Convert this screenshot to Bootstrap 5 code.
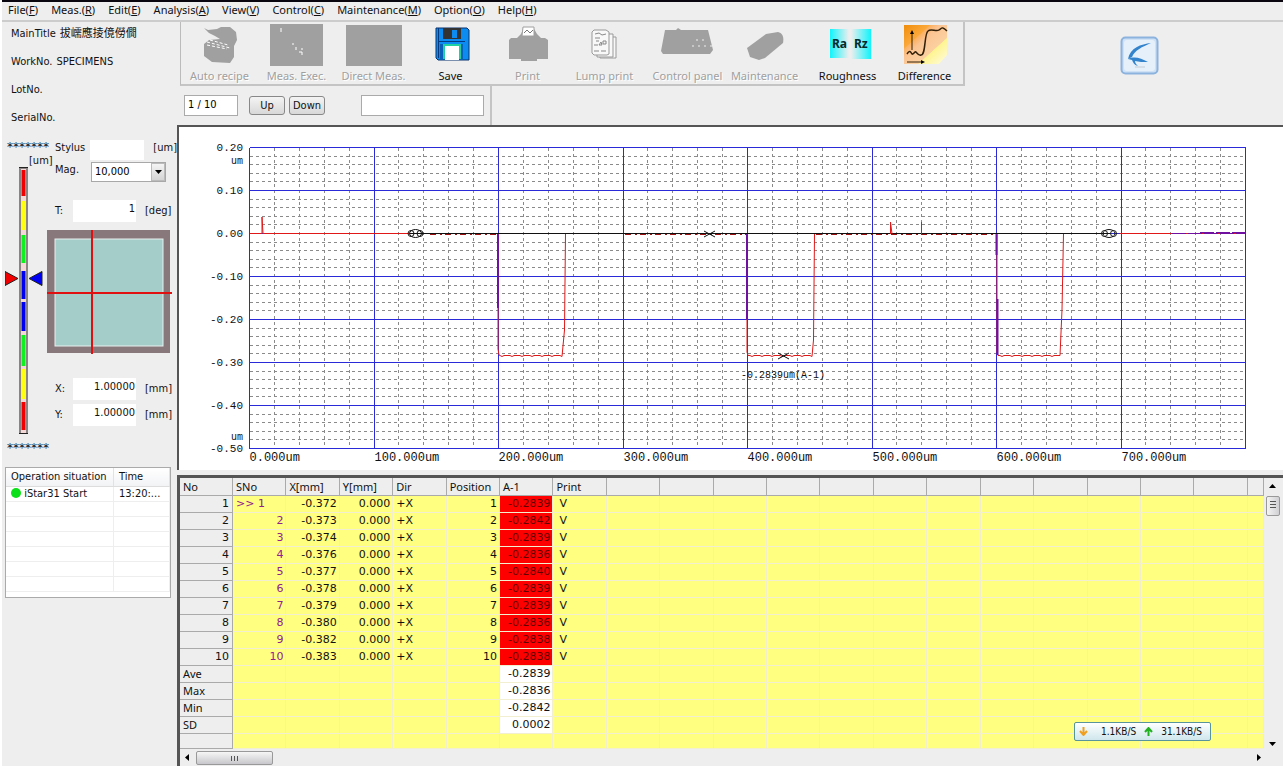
<!DOCTYPE html>
<html lang="en">
<head>
<meta charset="utf-8">
<meta name="viewport" content="width=device-width, initial-scale=1">
<title>iStar31</title>
<link rel="stylesheet" href="https://cdn.jsdelivr.net/npm/bootstrap@5.3.0/dist/css/bootstrap.min.css">
<style>
body{background:#eee;color:#111;font-family:"Noto Sans","Noto Sans CJK SC",sans-serif;font-size:11px;line-height:16px;border-left:2px solid #fff;border-right:2px solid #fff}
.menubar{border-top:2px solid #0a0610;border-bottom:2px solid #ccc;height:22px;padding-left:6px;gap:13px}
.menubar a{color:#111;text-decoration:none;line-height:15px;white-space:nowrap}
.side{width:175px;font-family:"DejaVu Sans Condensed","Noto Sans CJK SC",sans-serif;font-size:11px}
.meta-line{padding-left:9px;margin-bottom:12px;line-height:16px;display:flex;gap:4px}
.gauges{padding-top:2px}
.gauge-col{width:42px;margin-left:3px}
.stars{line-height:14px;font-size:12px;font-family:"DejaVu Sans",sans-serif;padding-left:2px;white-space:nowrap}
.stars-end{margin-top:6px}
.unit{line-height:13px;padding-left:24px;white-space:nowrap}
.fields{width:130px}
.frow{display:flex;padding-left:8px;white-space:nowrap}
.frow input{border:0;border-radius:0;background:#fff;padding:0 1px 6px 0;text-align:right;font-size:11px;line-height:16px;height:22px;width:63px;color:#111}
.frow input.stylus{width:54px;height:20px}
.frow-mag{margin-top:2px}
.frow-t{margin-top:18px}
.lab-s{width:18px}.lab-l{width:36px}
.frow .end{padding-left:9px}
.mag{appearance:none;width:75px;height:20px;padding:0 3px;font-size:11px;border:1px solid #a8a8a8;border-radius:0;background:#fff;line-height:16px}
.mag-arrow{right:1px;top:1px;width:14px;height:18px;border:1px solid #bbb;background:linear-gradient(#f4f4f4,#d4d4d4);pointer-events:none}
.oplist{width:166px;margin:12px 0 0 3px;border:1px solid #aaa;background:#fff;padding-bottom:5px}
.oplist table{width:100%;table-layout:fixed;white-space:nowrap}
.oplist .when{width:56px}
.oplist th{font-weight:400;height:18px;line-height:17px;background:linear-gradient(#fff,#f2f3f5);border-bottom:1px solid #ddd;border-right:1px solid #e2e2e2;padding:0 5px}
.oplist td{height:15px;line-height:14px;border-bottom:1px solid #eee;border-right:1px solid #eee;padding:0 5px}
.dot{width:10px;height:10px;border-radius:50%;background:#0be01a;display:inline-block;vertical-align:-1px}
.work{min-width:0}
.toolbar{border-left:1px solid #bbb;border-right:2px solid #c4c4c4;border-bottom:2px solid #c4c4c4;height:64px;margin-left:3px}
.tool{width:77px;border:0;background:none;padding:0;display:flex;flex-direction:column;align-items:center;white-space:nowrap;color:#111;line-height:16px}
.tool svg{height:44px;width:56px;margin-bottom:2px}
.tool:disabled{color:#a0a0a0;text-shadow:1px 1px #fff}
.tool-gap{margin-left:6px}
.birdlogo{margin:14px 124px 0 auto}
.pager{height:39px;width:315px;padding:9px 0 0 7px;border-right:2px solid #c4c4c4;font-family:"DejaVu Sans Condensed",sans-serif}
.pager input{border:1px solid #aaa;border-radius:0;background:#fff;height:21px;font-size:11px;line-height:14px;padding:0 3px 2px}
.pager .page-no{width:54px;margin-right:11px}
.pager .note{width:123px;margin-left:36px}
.pbtn{width:36px;height:19px;margin-top:1px;border:1px solid #888;border-radius:3px;background:linear-gradient(#f4f4f4,#d8d8d8);font-size:11px;line-height:16px;padding:0;color:#111}
.chart-panel{border-top:2px solid #555;border-left:2px solid #555;background:#fff}
.chart-panel svg{width:100%;height:auto;display:block}
.grid-panel{margin-top:5px;border-top:3px solid #555;border-left:3px solid #555}
.data{width:100%;table-layout:fixed;border-collapse:separate;border-spacing:0;line-height:16px;white-space:nowrap}
.data .rowhead{width:53px}.data .tail{width:16px}
.data th{font-weight:400;background:#eee;border-right:1px solid #aaa;border-bottom:1px solid #aaa;height:17px;padding:0 3px}
.data thead th{height:18px;padding-top:1px}
.data td,.data th.text-end{font-family:"DejaVu Sans",sans-serif;font-size:11px}
.data td{height:17px;background:#ffff80;border-right:1px solid #f2eed0;border-bottom:1px solid #f2eed0;padding:0 2px 0 3px}
.data tr:last-child td,.data tr:last-child th[scope=row]{height:15px;line-height:14px}
.data .ng{background:#f00;color:#600000}
.data .calc{background:#fff}
.data .sno{color:#902090}
.data .v{padding-left:6px}
.vbar{width:19px;padding:6px 2px 3px 0}
.vthumb{width:14px;height:20px;border:1px solid #999;border-radius:2px;background:linear-gradient(90deg,#f4f4f4,#d0d0d4);margin-top:8px}
.hbar{height:17px;padding:0 21px 0 4px}
.hthumb{width:77px;height:14px;border:1px solid #999;border-radius:2px;background:linear-gradient(#f6f6f6,#c8c8cc);margin-left:5px}
.netspeed{right:72px;bottom:25px;height:19px;width:137px;border:1px solid #58949c;border-radius:2px;background:linear-gradient(#fff,#cfe6ec);font:10px/17px "DejaVu Sans Condensed",sans-serif;white-space:nowrap}
</style>
</head>
<body>
<nav class="menubar d-flex" aria-label="Main menu">
<a href="#">File(<u>F</u>)</a><a href="#">Meas.(<u>R</u>)</a><a href="#">Edit(<u>E</u>)</a><a href="#">Analysis(<u>A</u>)</a><a href="#">View(<u>V</u>)</a><a href="#">Control(<u>C</u>)</a><a href="#">Maintenance(<u>M</u>)</a><a href="#">Option(<u>O</u>)</a><a href="#">Help(<u>H</u>)</a>
</nav>
<div class="d-flex">
<aside class="side flex-shrink-0 pt-1">
  <div class="meta-line"><span>MainTitle</span><span>拔嶿應掕傹僗僩</span></div>
  <div class="meta-line"><span>WorkNo.</span><span>SPECIMENS</span></div>
  <div class="meta-line">LotNo.</div>
  <div class="meta-line">SerialNo.</div>
  <div class="gauges d-flex">
    <div class="gauge-col flex-shrink-0">
      <div class="stars">*******</div>
      <div class="unit">[um]</div>
      <svg width="38" height="268" viewBox="5 168 38 268" class="d-block" role="img" aria-label="Stylus level">
        <rect x="19" y="168" width="9" height="267" fill="#8c8484"/><path d="M19 168.500h9M19 434.500h9" stroke="#222"/>
        <rect x="21" y="170" width="5" height="264" fill="#f4d8d8"/>
        <path d="M23.500 171v26M23.500 403v28" stroke="#f00000" stroke-width="4"/><path d="M23.500 202v29M23.500 370v30" stroke="#ffff10" stroke-width="4"/><path d="M23.500 236v28M23.500 336v31" stroke="#10f020" stroke-width="4"/><path d="M23.500 272v28M23.500 303v29" stroke="#0000f0" stroke-width="4"/>
        <path d="M5 272.500v14l13-7z" fill="#f00000" stroke="#222"/><path d="M42 272.500v14l-13-7z" fill="#0000f0" stroke="#222"/>
      </svg>
      <div class="stars stars-end">*******</div>
    </div>
    <div class="fields">
      <div class="frow"><label class="lab-l" for="sty">Stylus</label><input id="sty" class="stylus"><span class="end">[um]</span></div>
      <div class="frow frow-mag"><label class="lab-l" for="mag">Mag.</label><div class="position-relative"><select id="mag" class="mag"><option>10,000</option></select><span class="mag-arrow position-absolute d-flex align-items-center justify-content-center"><svg width="7" height="4"><path d="M0 0h7L3.500 4z"/></svg></span></div></div>
      <div class="frow frow-t align-items-center"><label class="lab-s" for="tt">T:</label><input id="tt" value="1"><span class="end">[deg]</span></div>
      <svg class="d-block mt-2" width="125" height="124" viewBox="0 0 125 124" role="img" aria-label="Stage position"><rect width="123" height="123" fill="#88777b"/><rect x="8" y="9" width="108" height="107" fill="#a4cdca" stroke="#e8f0ee"/><path d="M45 0v124M0 63h125" stroke="#e01010" stroke-width="2"/></svg>
      <div class="frow mt-4 align-items-center"><label class="lab-s" for="xx">X:</label><input id="xx" value="1.00000"><span class="end">[mm]</span></div>
      <div class="frow mt-1 align-items-center"><label class="lab-s" for="yy">Y:</label><input id="yy" value="1.00000"><span class="end">[mm]</span></div>
    </div>
  </div>
  <div class="oplist"><table><colgroup><col><col class="when"></colgroup>
    <thead><tr><th>Operation situation</th><th>Time</th></tr></thead>
    <tbody><tr><td><span class="dot"></span> iStar31 Start</td><td>13:20:...</td></tr><tr><td></td><td></td></tr><tr><td></td><td></td></tr><tr><td></td><td></td></tr><tr><td></td><td></td></tr><tr><td></td><td></td></tr><tr><td></td><td></td></tr></tbody></table></div>
</aside>
<main class="work flex-grow-1">
  <div class="d-flex align-items-start">
    <div class="toolbar d-flex">
      <button class="tool" disabled><svg viewBox="0 0 56 44"><path d="M12 6l4 2 9-1 4-2h9l6 5 1 8-3 6v11l-4 6-18-1-8-6V22l5-4 11-1-5-3-6-3z" fill="#a0a0a0"/><path d="M15 20l23 6M15 23l20 4M18 18l18 5" stroke="#fff" stroke-dasharray="3 2"/></svg>Auto recipe</button>
      <button class="tool" disabled><svg viewBox="0 0 56 44"><path d="M1 2h53v42H1z" fill="#a0a0a0"/><path d="M12 6v4M23 22h2M27 25v3M32 27h2M30 30h3v3" stroke="#fff" fill="none"/></svg>Meas. Exec.</button>
      <button class="tool" disabled><svg viewBox="0 0 56 44"><path d="M0 3h56v41H0z" fill="#a0a0a0"/></svg>Direct Meas.</button>
      <button class="tool"><svg viewBox="0 0 56 44"><path d="M13 6h31l2 2v30H15l-2-2z" fill="#0c8cf0" stroke="#06306c"/><path d="M20 6h18v11H20z" fill="#333"/><path d="M29 8h5v8h-5z" fill="#0c8cf0"/><path d="M16 19.500h26M15.500 6v30" stroke="#063a80"/><path d="M17 22h23v15H17z" fill="#0a60b8"/><path d="M20 22h18v15H20z" fill="#20d0a0"/><path d="M22 24h14v14H22z" fill="#fff"/></svg>Save</button>
      <button class="tool" disabled><svg viewBox="0 0 56 44"><path d="M9 18l2-2h6l4-4 3-7h9l4 7 4 4h4l3 2v19H37v2H21v-2H9z" fill="#a0a0a0"/><path d="M23 5h11v9H22z" fill="#fff" stroke="#a0a0a0"/><path d="M24 11l3-3 3 3 3-3" fill="none" stroke="#777"/></svg>Print</button>
      <button class="tool" disabled><svg viewBox="0 0 56 44"><g fill="#f8f8f8" stroke="#999"><path d="M23 15h16v21H23z"/><path d="M20 12h16v23H20z"/><path d="M15 10l2-2h12l3 2v22l-2 1H17l-2-2z"/></g><path d="M18 12l4-1 3 2 4-1M18 16h5M19 19h3M17 23h4M17 29h5M24 29h5" stroke="#888" fill="none"/><path d="M22 23l2-3 1 3zM26 19h3v3h-3z" fill="none" stroke="#888"/></svg>Lump print</button>
      <button class="tool tool-gap" disabled><svg viewBox="0 0 56 44"><path d="M5 8h11l2-2 3 2h27l5 20-3 4H3l-2-3z" fill="#a0a0a0"/><path d="M36 18h12M32 24h20" stroke="#eee" stroke-dasharray="2 4"/></svg>Control panel</button>
      <button class="tool" disabled><svg viewBox="0 0 56 44"><path d="M10 26l19-14 12-2c5 1 6 6 5 11L28 36l-6 2-9-3z" fill="#a0a0a0"/></svg>Maintenance</button>
      <button class="tool tool-gap"><svg viewBox="0 0 56 44"><defs><linearGradient id="ra"><stop offset="0" stop-color="#10f4fc"/><stop offset="1" stop-color="#eee"/></linearGradient><linearGradient id="rz"><stop offset="0" stop-color="#eee"/><stop offset="1" stop-color="#10f4fc"/></linearGradient></defs><path d="M10 7h19v29H10z" fill="url(#ra)"/><path d="M31 7h20v30H31z" fill="url(#rz)"/><text x="12" y="26" font-family="Noto Sans" font-size="12" font-weight="700" fill="#032a2c">Ra</text><text x="34" y="26" font-family="Noto Sans" font-size="12" font-weight="700" fill="#032a2c">Rz</text></svg>Roughness</button>
      <button class="tool"><svg viewBox="0 0 56 44"><defs><linearGradient id="df" x2="1" y2="1"><stop offset="0" stop-color="#f08c08"/><stop offset=".3" stop-color="#fba93c"/><stop offset=".31" stop-color="#fbb060"/><stop offset=".42" stop-color="#fbc492"/><stop offset=".66" stop-color="#fcd0a0"/><stop offset=".67" stop-color="#fff490"/><stop offset="1" stop-color="#fffce0"/></linearGradient></defs><path d="M7 3h43v30l-8 9H7z" fill="url(#df)"/><path d="M10 32c3-5 4-1 5 0s3-3 4-2 3 4 5 3c5 0 3-21 7-24 3-3 8 1 11-1s3-4 8 1" fill="none" stroke="#322008" stroke-width="1.500"/><path d="M15 28V10M10 40h16" stroke="#322008"/><path d="M13 12l2-4 2 4zM24 38l4 2-4 2z"/></svg>Difference</button>
    </div>
    <svg class="birdlogo" width="39" height="39" viewBox="0 0 39 39" role="img" aria-label="Bird logo"><rect x="1.500" y="1.500" width="36" height="36" rx="4" fill="#cfe1f4" stroke="#8cb2de" stroke-width="2"/><rect x="4" y="4" width="31" height="31" rx="3" fill="#e6f0fa"/><path d="M31 7C21 8 10 12 8 23l4-2c3-7 10-10 19-14z" fill="#3384cc"/><path d="M8 23c6-3 13-1 20 3-5 0-9 0-13-1 0 2 1 3 3 5-4-1-5-4-6-6z" fill="#3384cc"/><path d="M15 31h10" stroke="#c4ccd4"/></svg>
  </div>
  <div class="pager d-flex align-items-start">
    <input class="page-no" aria-label="Page" value="1 / 10"><button class="pbtn">Up</button><button class="pbtn ms-1">Down</button><input class="note" aria-label="Comment">
  </div>
  <section class="chart-panel"><svg id="chart" viewBox="179 127 1104 343" role="img" aria-label="Step profile"></svg></section>
  <section class="grid-panel position-relative">
    <div class="d-flex">
      <div class="work flex-grow-1"><table class="data"><colgroup id="cols"></colgroup><thead><tr id="head"></tr></thead><tbody id="rows"></tbody></table></div>
      <div class="vbar flex-shrink-0 d-flex flex-column align-items-center"><svg width="7" height="4"><path d="M0 4h7L3.500 0z"/></svg><div class="vthumb"><svg width="6" height="8" class="d-block mx-auto mt-1"><path d="M0 .5h6M0 3.500h6M0 6.500h6" stroke="#555"/></svg></div><svg class="mt-auto" width="7" height="4"><path d="M0 0h7L3.500 4z"/></svg></div>
    </div>
    <div class="hbar d-flex align-items-center"><svg width="7" height="7"><path d="M5 0v7L1 3.500z"/></svg><div class="hthumb"><svg width="8" height="6" class="d-block mx-auto mt-1"><path d="M.5 0v5M3.500 0v5M6.500 0v5" stroke="#555"/></svg></div><svg class="ms-auto" width="5" height="7"><path d="M0 0v7L4 3.500z"/></svg></div>
    <div class="netspeed position-absolute d-flex align-items-center"><svg width="9" height="9" class="ms-1" viewBox="0 0 9 9"><path d="M4.500 0v7M1 4l3.500 4L8 4" fill="none" stroke="#f0a020" stroke-width="2"/></svg><span class="flex-grow-1 text-end">1.1KB/S</span><svg width="9" height="9" class="ms-2" viewBox="0 0 9 9"><path d="M4.500 9V2M1 5l3.500-4L8 5" fill="none" stroke="#20b020" stroke-width="2"/></svg><span class="ms-2 me-2">31.1KB/S</span></div>
  </section>
</main>
</div>
<script>
// Profile chart: 0-800 um across, 0.20 to -0.50 um down
(() => {
  const L=250,R=1246,T=148,B=449,X=i=>Math.round(L+(R-L)*i/40)-.5,Y=i=>Math.round(T+(B-T)*i/35)-.5;
  let minor='',major='',t='';
  for(let i=0;i<=40;i++){const d=`M${X(i)} ${T}V${B}`;i%5?minor+=d:major+=d}
  for(let i=0;i<=35;i++){const d=`M${L} ${Y(i)}H${R}`;i%5?minor+=d:major+=d}
  ['0.20','0.10','0.00','-0.10','-0.20','-0.30','-0.40','-0.50'].forEach((s,i)=>t+=`<text x="243" y="${Y(i*5)+3.5}" text-anchor="end" font-size="11">${s}</text>`);
  t+='<text x="243" y="164" text-anchor="end" font-size="10">um</text><text x="243" y="440" text-anchor="end" font-size="10">um</text>';
  for(let i=0;i<8;i++)t+=`<text x="${X(i*5)}" y="461" font-size="12">${i}${i?'00':''}.000um</text>`;
  t+='<text x="741" y="378" font-size="10">-0.2839um(A-1)</text>';
  const rough=(a,b)=>{let s='';for(let x=a;x<b;x+=2)s+=`L${x} ${355.5+((x*7)%5>3?1:0)}`;return s};
  document.getElementById('chart').innerHTML=`<path d="${minor}" stroke="#8a8a8a" stroke-dasharray="3 3"/><path d="${major}" stroke="#2a2ad8" fill="none"/>
  <path d="M410 233.500H1110" stroke="#111"/>
  <g fill="none" stroke="#e01818"><path d="M250 233.500H262V217L263 233.500H410M498 234V349L499 355${rough(500,564)}L564.500 330L565.500 234M747 234V352${rough(748,813)}L813.500 340L814.500 234M997 234V352${rough(998,1061)}L1062 310L1063.500 234M890.500 234V222L892 234M921.500 234V222M1120 233.500H1246"/><path d="M430 234.500H498M625 234.500H747M816 234.500H996" stroke="#a01010" stroke-dasharray="6 4 2 3"/></g>
  <path d="M498 234V308M747 234V319M996.500 234V255M997.500 299V355" stroke="#7010a0" stroke-width="2" fill="none"/><path d="M1172 233.500h74M1200 232.500h46" stroke="#7010a0" stroke-dasharray="14 2"/>
  <g fill="none" stroke="#111"><ellipse cx="415.500" cy="233.500" rx="6" ry="4"/><circle cx="411" cy="233.500" r="3"/><circle cx="420" cy="233.500" r="3"/><ellipse cx="1109" cy="233.500" rx="6" ry="4"/><circle cx="1104.500" cy="233.500" r="3"/><circle cx="1113.500" cy="233.500" r="3"/><path d="M704 231l11 6M704 237l11-6M778 353l11 6M778 359l11-6"/></g>
  <g font-family="Liberation Mono,monospace" fill="#111">${t}</g>`;
})();
// Result grid
(() => {
  const heads=['No','SNo','X[mm]','Y[mm]','Dir','Position','A-1','Print'],N=21,$=id=>document.getElementById(id);
  const xs=['372','373','374','376','377','378','379','380','382','383'],a=['2839','2842','2839','2836','2840','2839','2839','2836','2838','2838'];
  $('cols').innerHTML='<col class="rowhead">'+'<col>'.repeat(19)+'<col class="tail">';
  $('head').innerHTML=Array.from({length:N},(_,i)=>`<th scope="col">${heads[i]||''}</th>`).join('');
  const td='<td></td>';let h='';
  xs.forEach((x,i)=>h+=`<tr><th scope="row" class="text-end">${i+1}</th><td class="sno ${i?'text-end':''}">${i?i+1:'&gt;&gt; 1'}</td><td class="text-end">-0.${x}</td><td class="text-end">0.000</td><td>+X</td><td class="text-end">${i+1}</td><td class="ng text-end">-0.${a[i]}</td><td class="v">V</td>${td.repeat(13)}</tr>`);
  [['Ave','-0.2839'],['Max','-0.2836'],['Min','-0.2842'],['SD','0.0002'],['','']].forEach(r=>h+=`<tr><th scope="row">${r[0]}</th>${td.repeat(5)}<td class="${r[0]?'calc':''} text-end">${r[1]}</td>${td.repeat(14)}</tr>`);
  $('rows').innerHTML=h;
})();
</script>
<script src="https://cdn.jsdelivr.net/npm/bootstrap@5.3.0/dist/js/bootstrap.bundle.min.js"></script>
</body>
</html>
